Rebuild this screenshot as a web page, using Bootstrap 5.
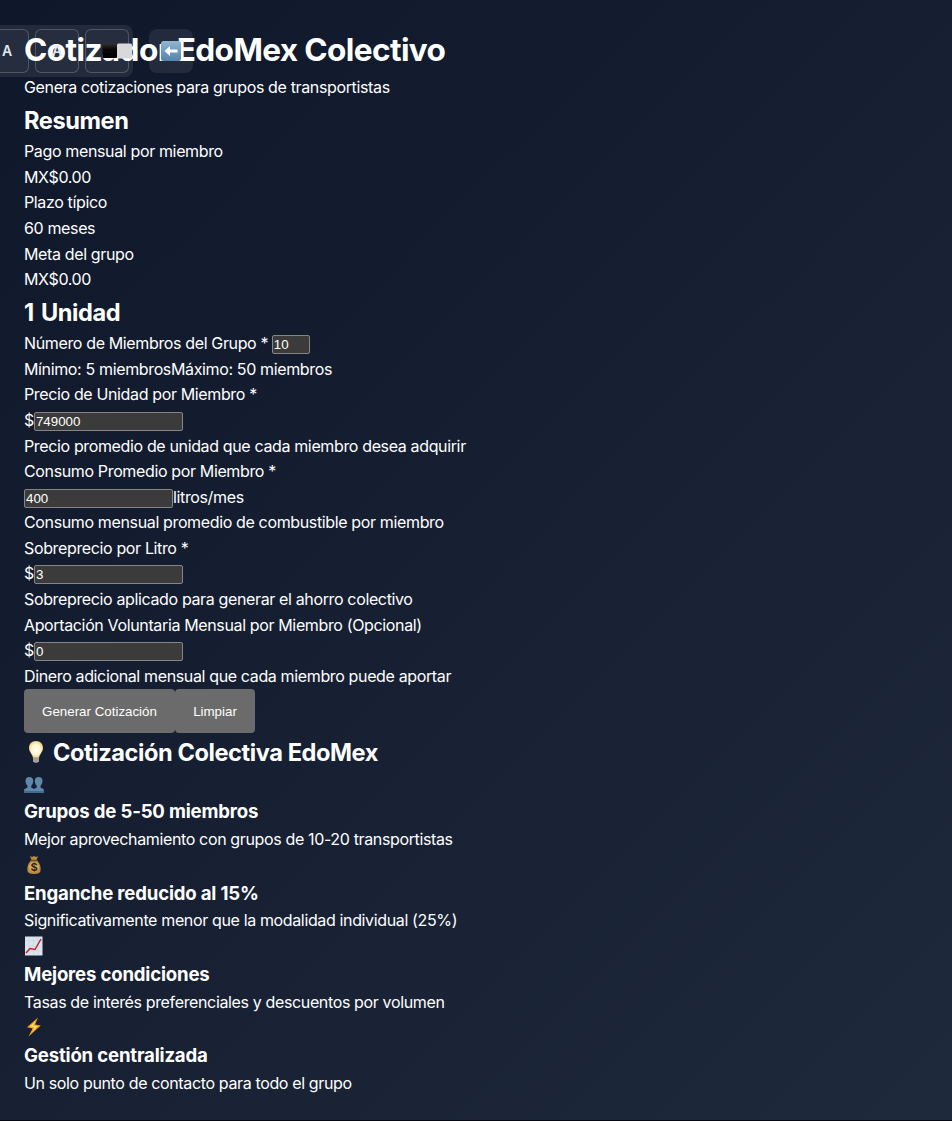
<!DOCTYPE html>
<html lang="es">
<head>
<meta charset="utf-8">
<meta name="viewport" content="width=device-width, initial-scale=1">
<title>Cotizador EdoMex Colectivo</title>
<link href="https://cdn.jsdelivr.net/npm/bootstrap@5.3.0/dist/css/bootstrap.min.css" rel="stylesheet">
<style>
html{background:#05080f}
body{font-family:Inter,"Liberation Sans",sans-serif;font-size:16px;line-height:1.6;color:#fff;background:#05080f;letter-spacing:-.36px}
main{height:1120px;background:linear-gradient(135deg,#0f172a 0%,#1e293b 100%);overflow:hidden}
h1,h2,h3{font-weight:700;margin:0;white-space:nowrap}
h1{font-size:31.6px;height:51.2px;line-height:51.2px;letter-spacing:-.62px}
h2{font-size:23.6px;height:38.4px;line-height:38.4px;padding-top:1px;letter-spacing:-.43px}
h3{font-size:18.6px;height:29.95px;line-height:29.95px;letter-spacing:-.18px}
p{margin:0}
p,.line{height:25.6px;white-space:nowrap}
.wide-space{word-spacing:2px}
.field{width:149px;height:19px;padding:1px 1px;border:1px solid #858585;border-radius:2px;background:#3b3b3b;color:#fff;font:13.333px "Liberation Sans",Arial,sans-serif;letter-spacing:0;margin-top:1.3px}
.field-sm{width:38px;margin-left:3.7px}
.action{height:44px;border:0;border-radius:4px;background:#6b6b6b;color:#fff;font:13.333px "Liberation Sans",Arial,sans-serif;letter-spacing:0;padding:0}
.action-main{width:151px}.action-clear{width:80px}
.tools{left:-20px;top:25px;width:153px;height:52px;border-radius:8px;background:rgba(255,255,255,.08);padding-left:5px;gap:6px}
.tool{flex:0 0 44px;min-width:0;height:44px;border:1px solid rgba(255,255,255,.2);border-radius:6px;background:rgba(255,255,255,.015);color:#e2e8f0;font-weight:600;font-size:14px;letter-spacing:0}
.swatches{margin-left:16px}
.back{left:149px;top:29px;width:44px;height:44px;border-radius:8px;background:rgba(255,255,255,.08)}
svg{display:block;flex:none}
.emoji{margin-bottom:1.5px}
</style>
</head>
<body>
<main class="p-4 position-relative">
  <h1>Cotizador EdoMex Colectivo</h1>
  <p>Genera cotizaciones para grupos de transportistas</p>
  <h2>Resumen</h2>
  <p>Pago mensual por miembro</p>
  <p>MX$0.00</p>
  <p>Plazo típico</p>
  <p>60 meses</p>
  <p>Meta del grupo</p>
  <p>MX$0.00</p>
  <h2 class="wide-space">1 Unidad</h2>
  <div class="line d-flex align-items-center"><label for="n">Número de Miembros del Grupo *</label><input id="n" class="field field-sm" value="10"></div>
  <div class="line d-flex"><span>Mínimo: 5 miembros</span><span>Máximo: 50 miembros</span></div>
  <p>Precio de Unidad por Miembro *</p>
  <div class="line d-flex align-items-center"><span>$</span><input class="field" value="749000"></div>
  <p>Precio promedio de unidad que cada miembro desea adquirir</p>
  <p>Consumo Promedio por Miembro *</p>
  <div class="line d-flex align-items-center"><input class="field" value="400"><span>litros/mes</span></div>
  <p>Consumo mensual promedio de combustible por miembro</p>
  <p>Sobreprecio por Litro *</p>
  <div class="line d-flex align-items-center"><span>$</span><input class="field" value="3"></div>
  <p>Sobreprecio aplicado para generar el ahorro colectivo</p>
  <p>Aportación Voluntaria Mensual por Miembro (Opcional)</p>
  <div class="line d-flex align-items-center"><span>$</span><input class="field" value="0"></div>
  <p>Dinero adicional mensual que cada miembro puede aportar</p>
  <div class="d-flex"><button class="action action-main">Generar Cotización</button><button class="action action-clear">Limpiar</button></div>
  <h2 class="d-flex align-items-center"><svg width="29" height="26" viewBox="0 0 29 26"><defs><radialGradient id="glow"><stop offset="0" stop-color="#fffef2"/><stop offset=".6" stop-color="#fff8d8"/><stop offset="1" stop-color="#f1d07a"/></radialGradient></defs><path d="M12 1C7.500 1 5 4.200 5 8c0 4 3.500 6 4 10h6c.5-4 4-6 4-10 0-3.800-2.500-7-7-7z" fill="url(#glow)"/><path d="M9 17.500h6v4q-3 3-6 0z" fill="#898989"/><path d="M9 19h6M9 21h6" stroke="#c7c7c7" stroke-width=".8"/></svg><span>Cotización Colectiva EdoMex</span></h2>

  <div class="line d-flex align-items-center"><svg width="20" height="18" viewBox="0 0 20 18"><g fill="#6088ab"><path id="person" d="M5.300 1C2.900 1 1.500 2.600 1.500 5c0 2.200.9 3.800 2 4.700v1.800L.2 13.200V17h10.300v-3.800l-3.300-1.700V9.700c1.100-.9 2-2.500 2-4.700 0-2.400-1.400-4-3.900-4z"/><use href="#person" x="9.300"/></g><path d="M0 16h20" stroke="#426b90" stroke-width="2"/></svg></div>
  <h3>Grupos de 5-50 miembros</h3>
  <p>Mejor aprovechamiento con grupos de 10-20 transportistas</p>
  <div class="line d-flex align-items-center"><svg class="emoji" width="20" height="20" viewBox="0 0 20 20"><path d="M6 1l2 1 2-1 2 1 2-1-1.500 4C16 8 17 12 16.500 16q-.5 3-6.500 3t-6.500-3C3 12 4 8 7.500 5z" fill="#b98c42"/><path d="M7 5.500h6" stroke="#705025" stroke-width="1.500"/><circle cx="10" cy="12" r="5" fill="#d5ad5c"/><text x="10" y="16" text-anchor="middle" font-size="11" font-weight="700" fill="#322310">$</text></svg></div>
  <h3>Enganche reducido al 15%</h3>
  <p>Significativamente menor que la modalidad individual (25%)</p>
  <div class="line d-flex align-items-center"><svg class="emoji" width="20" height="20" viewBox="0 0 20 20"><path d="M1 .5h17.500v19H1z" fill="#dce5ec"/><path d="M5 1v18M9.500 1v18M14 1v18M1 5h17M1 10h17M1 15h17" stroke="#c8d5df" stroke-width=".6"/><path d="M2 17l4-4.500 5 1L17 3" fill="none" stroke="#c5222e" stroke-width="1.500"/></svg></div>
  <h3>Mejores condiciones</h3>
  <p>Tasas de interés preferenciales y descuentos por volumen</p>
  <div class="line d-flex align-items-center"><svg class="emoji" width="20" height="20" viewBox="0 0 20 20"><path d="M14 .5L3 10.200l5.600 1.300L4.500 19.500 16.800 8.500l-5.800-1z" fill="#f2a51f"/><path d="M12 4L6 9.500l4.500.8-2.500 5 5.500-6-4.500-.7z" fill="#ffe07a"/></svg></div>
  <h3>Gestión centralizada</h3>
  <p>Un solo punto de contacto para todo el grupo</p>

  <div class="tools position-absolute d-flex align-items-center">
    <div class="tool d-flex align-items-center justify-content-center">A</div>
    <div class="tool d-flex align-items-center justify-content-center">A</div>
    <div class="tool d-flex align-items-center justify-content-start"><svg class="swatches" width="30" height="16" viewBox="0 0 30 16"><defs><linearGradient id="ink" x2="0" y2="1"><stop stop-color="#333"/><stop offset=".4" stop-color="#080808"/><stop offset="1"/></linearGradient></defs><rect x=".5" y=".5" width="14.500" height="14.500" rx="1" fill="url(#ink)"/><rect x="15" y=".5" width="15" height="15" rx="1.500" fill="#d9d9d9"/></svg></div>
  </div>
  <div class="back position-absolute d-flex align-items-center justify-content-center"><svg width="20" height="20" viewBox="0 0 20 20"><defs><linearGradient id="sky" x2="0" y2="1"><stop stop-color="#91b6d2"/><stop offset="1" stop-color="#5583aa"/></linearGradient></defs><rect width="20" height="20" rx="2.500" fill="url(#sky)"/><path d="M3.500 10L9 5v3.500h7.500v3H9V15z" fill="#fff"/></svg></div>
</main>
</body>
</html>
